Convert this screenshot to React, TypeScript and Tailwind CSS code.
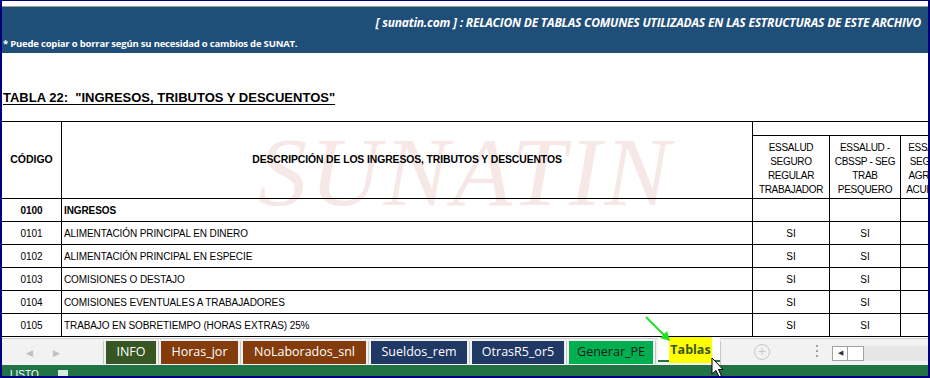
import React from "react";

const rows = [
  { code: "0100", desc: "INGRESOS", bold: true, si: false },
  { code: "0101", desc: "ALIMENTACIÓN PRINCIPAL EN DINERO", bold: false, si: true },
  { code: "0102", desc: "ALIMENTACIÓN PRINCIPAL EN ESPECIE", bold: false, si: true },
  { code: "0103", desc: "COMISIONES O DESTAJO", bold: false, si: true },
  { code: "0104", desc: "COMISIONES EVENTUALES A TRABAJADORES", bold: false, si: true },
  { code: "0105", desc: "TRABAJO EN SOBRETIEMPO (HORAS EXTRAS) 25%", bold: false, si: true },
];

function Tab({ label, cls }: { label: string; cls: string }) {
  return (
    <div className={`h-[23px] flex items-center justify-center text-[12.5px] ${cls}`}>{label}</div>
  );
}

function Sep() {
  return <div className="w-px h-[23px] bg-[#c6c6c6] mx-[2px]" />;
}

export default function App() {
  return (
    <div className="relative w-[930px] h-[378px] overflow-hidden bg-white border-x-2 border-t border-b-2 border-[#00007f] flex flex-col font-['Liberation_Sans',sans-serif]">
      <div className="h-[5px] shrink-0 bg-white" />
      <div className="h-px shrink-0 bg-[#a0a0a0]" />
      {/* Blue band */}
      <div className="h-[46px] shrink-0 bg-[#1f4e78] flex flex-col text-white font-['Open_Sans',sans-serif]">
        <div className="h-[31px] flex items-center justify-end pr-[7px] text-[12px] font-bold italic tracking-[-0.2px] whitespace-pre">
          [ sunatin.com ] : RELACION DE TABLAS COMUNES UTILIZADAS EN LAS ESTRUCTURAS DE ESTE ARCHIVO
        </div>
        <div className="pl-px text-[9.5px] font-bold leading-[12px] tracking-[-0.2px]">
          * Puede copiar o borrar según su necesidad o cambios de SUNAT.
        </div>
      </div>
      {/* Title area */}
      <div className="h-[68px] shrink-0 flex items-end pb-[15px] pl-px">
        <span className="whitespace-pre text-[13px] font-bold underline underline-offset-2 text-black leading-[16px]">
          {'TABLA 22:  "INGRESOS, TRIBUTOS Y DESCUENTOS"'}
        </span>
      </div>
      {/* Table */}
      <div className="relative h-[217px] shrink-0 overflow-hidden">
        <div className="absolute left-[256px] top-[2px] text-[98px] italic leading-none text-[#f7e8e8] tracking-[3px] font-['Liberation_Serif',serif] pointer-events-none select-none">
          SUNATIN
        </div>
        <div className="relative grid grid-cols-[60px_691px_77px_71px_60px] grid-rows-[14px_63px_repeat(6,23px)] border-t border-black text-black w-[959px]">
          <div className="row-span-2 border-r border-b border-black flex items-center justify-center text-[10.5px] font-bold">
            CÓDIGO
          </div>
          <div className="row-span-2 border-r border-b border-black flex items-center justify-center text-[10.4px] font-bold tracking-[-0.1px]">
            DESCRIPCIÓN DE LOS INGRESOS, TRIBUTOS Y DESCUENTOS
          </div>
          <div className="col-span-3 border-b border-black" />
          {[
            ["ESSALUD", "SEGURO", "REGULAR", "TRABAJADOR"],
            ["ESSALUD -", "CBSSP - SEG", "TRAB", "PESQUERO"],
            ["ESSALUD", "SEGURO", "AGRARIO", "ACUICOLA"],
          ].map((lines, i) => (
            <div
              key={i}
              className="border-r border-b border-black flex flex-col items-center justify-center text-[10px] leading-[14px] tracking-[-0.3px] whitespace-nowrap overflow-hidden pt-[3px]"
            >
              {lines.map((l) => (
                <span key={l}>{l}</span>
              ))}
            </div>
          ))}
          {rows.map((r) => (
            <React.Fragment key={r.code}>
              <div className={`border-r border-b border-black flex items-center justify-center text-[10px] ${r.bold ? "font-bold" : ""}`}>
                {r.code}
              </div>
              <div className={`border-r border-b border-black flex items-center pl-[2px] text-[10px] tracking-[-0.1px] ${r.bold ? "font-bold" : ""}`}>
                {r.desc}
              </div>
              <div className="border-r border-b border-black flex items-center justify-center text-[10px]">{r.si ? "SI" : ""}</div>
              <div className="border-r border-b border-black flex items-center justify-center text-[10px]">{r.si ? "SI" : ""}</div>
              <div className="border-r border-b border-black" />
            </React.Fragment>
          ))}
        </div>
      </div>
      {/* Sheet tabs */}
      <div className="h-[27px] shrink-0 bg-[#f2f2f2] border-t border-[#d0d0d0] flex items-start pt-[2px] font-['Open_Sans',sans-serif]">
        <div className="w-[99px] h-[23px] flex items-center text-[#c0c0c0] text-[9px]">
          <span className="ml-[24px]">◀</span>
          <span className="ml-[20px]">▶</span>
        </div>
        <Sep />
        <Tab label="INFO" cls="w-[50px] bg-[#375623] text-white" />
        <Sep />
        <Tab label="Horas_jor" cls="w-[77px] bg-[#843c0c] text-white" />
        <Sep />
        <Tab label="NoLaborados_snl" cls="w-[123px] bg-[#843c0c] text-white" />
        <Sep />
        <Tab label="Sueldos_rem" cls="w-[96px] bg-[#203864] text-white" />
        <Sep />
        <Tab label="OtrasR5_or5" cls="w-[92px] bg-[#203864] text-white" />
        <Sep />
        <Tab label="Generar_PE" cls="w-[84px] bg-[#00b050] text-[#1a1a1a]" />
        <Sep />
        <div className="w-[62px] h-[24px] -mt-[3px] bg-white border-b-2 border-[#217346] flex items-start justify-end pr-[8px]">
          <div className="h-[26px] -mt-px w-[43px] bg-[#ffff00] flex items-center justify-center text-[12.5px] font-bold text-[#375623]">
            Tablas
          </div>
        </div>
        <div className="w-px h-[24px] bg-[#c6c6c6]" />
        <div className="ml-[33px] mt-[3px] w-[16px] h-[16px] rounded-full border border-[#c8c8c8] flex items-center justify-center text-[#c8c8c8] text-[14px] leading-none">
          +
        </div>
        <div className="ml-[46px] mt-[4px] flex flex-col gap-[3px]">
          <div className="w-[2px] h-[2px] bg-[#a0a0a0]" />
          <div className="w-[2px] h-[2px] bg-[#a0a0a0]" />
          <div className="w-[2px] h-[2px] bg-[#a0a0a0]" />
        </div>
        <div className="ml-[14px] mt-[5px] h-[15px] flex flex-1">
          <div className="w-[16px] h-[15px] border border-[#a0a0a0] bg-white flex items-center justify-center text-[#333] text-[7px]">◀</div>
          <div className="w-[16px] h-[15px] border-y border-r border-[#a0a0a0] bg-white" />
          <div className="flex-1 h-[15px] bg-[#e6e6e6]" />
        </div>
      </div>
      {/* Status bar */}
      <div className="h-[11px] shrink-0 bg-[#217346] overflow-hidden relative text-white">
        <span className="absolute left-[8px] top-[5px] text-[10px] leading-none">LISTO</span>
        <div className="absolute left-[56px] top-[5px] w-[10px] h-[8px] bg-[#d9e8df]" />
      </div>
      {/* Green annotation arrow */}
      <svg className="absolute left-[638px] top-[310px] pointer-events-none" width="36" height="34" viewBox="0 0 36 34">
        <line x1="6" y1="6" x2="26" y2="26" stroke="#22e022" strokeWidth="2" />
        <polygon points="30,30 20,27 27,20" fill="#22e022" />
      </svg>
      {/* Mouse cursor */}
      <svg className="absolute left-[709px] top-[356px] pointer-events-none" width="14" height="22" viewBox="0 0 14 22">
        <path d="M1 1 L1 17 L5 13.5 L8 20 L10.5 19 L7.5 12.5 L12 12.5 Z" fill="white" stroke="black" strokeWidth="1" />
      </svg>
    </div>
  );
}
